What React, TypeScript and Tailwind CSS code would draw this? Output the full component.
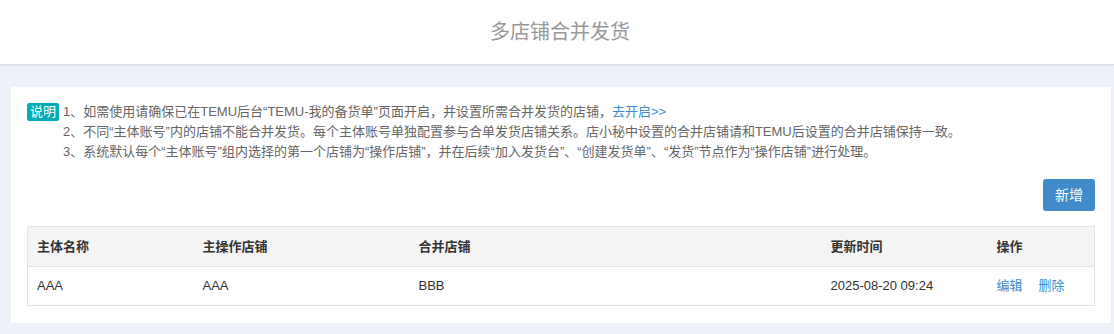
const cols = ["w-[166px]", "w-[216px]", "w-[412px]", "w-[166px]", ""];

const headers = ["主体名称", "主操作店铺", "合并店铺", "更新时间", "操作"];

const rows = [{ name: "AAA", main: "AAA", merged: "BBB", time: "2025-08-20 09:24" }];

export default function App() {
  return (
    <div className="min-h-[334px] bg-[#eef1f8] text-[13px] text-[#333] [font-family:'Liberation_Sans','Noto_Sans_CJK_SC',sans-serif]">
      <header className="h-[65px] bg-white border-b border-[#dcdcdc] shadow-[0_1px_2px_rgba(0,0,0,0.06)] flex items-center justify-center pl-[6px]">
        <h1 className="text-[20px] text-[#999] font-normal">多店铺合并发货</h1>
      </header>

      <div className="pt-[22px] pb-[11px] pl-[11px] pr-[3px]">
        <div className="bg-white px-4 pt-[15px] pb-[17px]">
          <div className="flex gap-1 leading-[20px] text-[#666]">
            <span className="shrink-0 h-[18px] mt-[1px] px-[3px] rounded-[2px] bg-[#00acb5] text-white text-[13px] leading-[18px]">
              说明
            </span>
            <div>
              <p>
                1、如需使用请确保已在TEMU后台“TEMU-我的备货单”页面开启，并设置所需合并发货的店铺，
                <a className="text-[#428bca]">去开启&gt;&gt;</a>
              </p>
              <p>2、不同“主体账号”内的店铺不能合并发货。每个主体账号单独配置参与合单发货店铺关系。店小秘中设置的合并店铺请和TEMU后设置的合并店铺保持一致。</p>
              <p>3、系统默认每个“主体账号”组内选择的第一个店铺为“操作店铺”，并在后续“加入发货台”、“创建发货单”、“发货”节点作为“操作店铺”进行处理。</p>
            </div>
          </div>

          <div className="flex justify-end mt-[17px] mb-[15px]">
            <button className="w-[52px] h-[32px] rounded-[3px] bg-[#428bca] text-white text-[14px]">新增</button>
          </div>

          <table className="w-full border border-[#e3e3e3] border-collapse">
            <thead>
              <tr className="bg-[#f4f4f4] h-[40px] border-b border-[#e3e3e3]">
                {headers.map((h, i) => (
                  <th key={h} className={`${cols[i]} pl-[9px] text-left font-bold text-[#333]`}>
                    {h}
                  </th>
                ))}
              </tr>
            </thead>
            <tbody>
              {rows.map((r) => (
                <tr key={r.name} className="h-[39px]">
                  <td className="pl-[9px]">{r.name}</td>
                  <td className="pl-[9px]">{r.main}</td>
                  <td className="pl-[9px]">{r.merged}</td>
                  <td className="pl-[9px]">{r.time}</td>
                  <td className="pl-[9px]">
                    <a className="text-[#428bca] mr-4">编辑</a>
                    <a className="text-[#428bca]">删除</a>
                  </td>
                </tr>
              ))}
            </tbody>
          </table>
        </div>
      </div>
    </div>
  );
}
